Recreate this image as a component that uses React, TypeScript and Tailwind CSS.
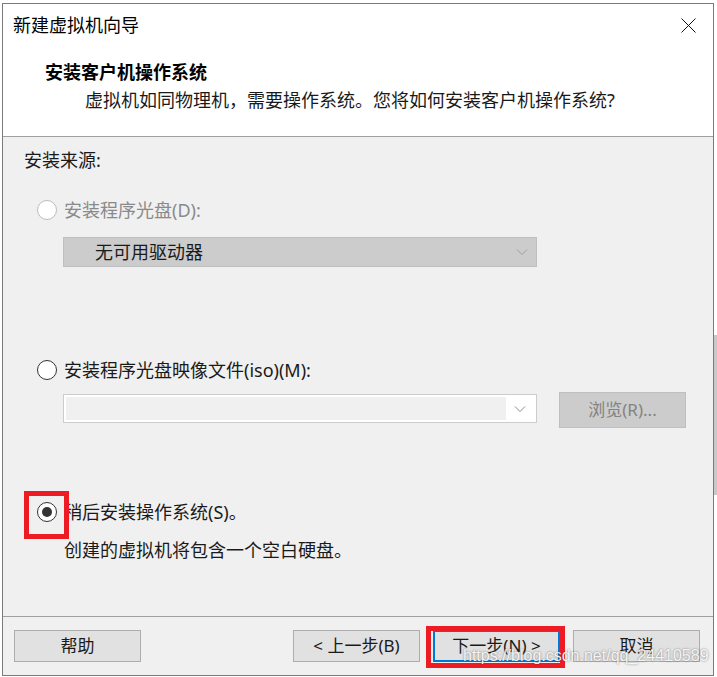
import React from 'react';

const ui = '[font-family:"Noto_Sans","Noto_Sans_CJK_SC",sans-serif]';

function Radio({ checked, disabled }: { checked?: boolean; disabled?: boolean }) {
  return (
    <span
      className={`flex h-5 w-5 shrink-0 items-center justify-center rounded-full border bg-white ${
        disabled ? 'border-[#bcbcbc]' : 'border-[#333333]'
      }`}
    >
      {checked && <span className="h-[10px] w-[10px] rounded-full bg-[#333333]" />}
    </span>
  );
}

function Chevron({ color }: { color: string }) {
  return (
    <svg width="12" height="8" viewBox="0 0 12 8" fill="none">
      <path d="M1 1.5 L6 6.5 L11 1.5" stroke={color} strokeWidth="1" />
    </svg>
  );
}

function Button({ children, primary }: { children: React.ReactNode; primary?: boolean }) {
  return (
    <div
      className={`flex h-8 w-[127px] items-center justify-center bg-[#e1e1e1] text-[17px] text-[#1a1a1a] ${
        primary ? 'border-2 border-[#0078d7]' : 'border border-[#adadad]'
      }`}
    >
      {children}
    </div>
  );
}

export default function App() {
  return (
    <div className={`relative h-[677px] w-[717px] overflow-hidden bg-white ${ui}`}>
      {/* bits of the window behind */}
      <div className="absolute right-0 top-[335px] h-[160px] w-[3px] bg-[#c8c8c8]" />

      <div className="relative ml-[2px] mt-[3px] flex h-[673px] w-[712px] flex-col border border-[#7a7a7a] bg-white">
        {/* title bar */}
        <div className="flex h-[43px] shrink-0 items-center justify-between pl-[10px] pr-[17px]">
          <span className="text-[18px] text-black">新建虚拟机向导</span>
          <svg width="15" height="15" viewBox="0 0 15 15" fill="none">
            <path d="M0.5 0.5 L14.5 14.5 M14.5 0.5 L0.5 14.5" stroke="#111" strokeWidth="1" />
          </svg>
        </div>

        {/* header */}
        <div className="h-[90px] shrink-0 border-b border-[#a0a0a0] pt-[13px]">
          <div className="pl-[42px] text-[18px] font-bold leading-6 text-black">安装客户机操作系统</div>
          <div className="mt-1 pl-[82px] text-[18px] leading-6 text-[#1a1a1a]">
            虚拟机如同物理机，需要操作系统。您将如何安装客户机操作系统?
          </div>
        </div>

        {/* body */}
        <div className="flex flex-1 flex-col bg-[#f0f0f0] pl-[21px] pt-[11px] text-[18px] leading-6">
          <div className="text-[#1a1a1a]">安装来源:</div>

          <div className="mt-[26px] flex items-center gap-[7px] pl-[13px]">
            <Radio disabled />
            <span className="text-[#8a8a8a]">安装程序光盘(D):</span>
          </div>
          <div className="ml-[39px] mt-[15px] flex h-[30px] w-[474px] items-center justify-between border border-[#bfbfbf] bg-[#cccccc] pl-[31px] pr-[8px]">
            <span className="text-[#1a1a1a]">无可用驱动器</span>
            <Chevron color="#a0a0a0" />
          </div>

          <div className="mt-[91px] flex items-center gap-[7px] pl-[13px]">
            <Radio />
            <span className="text-[#1a1a1a]">安装程序光盘映像文件(iso)(M):</span>
          </div>
          <div className="ml-[39px] mt-[10px] flex items-start gap-[22px]">
            <div className="mt-[2px] flex h-[29px] w-[474px] border border-[#cccccc] bg-white p-[2px]">
              <div className="flex-1 bg-[#f0f0f0]" />
              <div className="flex w-[28px] items-center justify-center">
                <Chevron color="#8a8a8a" />
              </div>
            </div>
            <div className="flex h-[36px] w-[127px] items-center justify-center border border-[#bfbfbf] bg-[#cccccc] text-[17px] text-[#838383]">
              浏览(R)...
            </div>
          </div>

          <div className="mt-[72px] flex items-center gap-[7px] pl-[13px]">
            <Radio checked />
            <span className="text-[#1a1a1a]">稍后安装操作系统(S)。</span>
          </div>
          <div className="mt-[14px] pl-[40px] text-[#1a1a1a]">创建的虚拟机将包含一个空白硬盘。</div>
        </div>

        {/* footer */}
        <div className="flex h-[59px] shrink-0 items-start justify-between border-t border-[#a0a0a0] bg-[#f0f0f0] pl-[11px] pr-[13px] pt-[13px]">
          <Button>帮助</Button>
          <div className="flex gap-[13px]">
            <Button>&lt; 上一步(B)</Button>
            <Button primary>下一步(N) &gt;</Button>
            <Button>取消</Button>
          </div>
        </div>

        {/* annotation boxes */}
        <div className="absolute left-[21px] top-[487px] h-[48px] w-[45px] border-[5px] border-[#ed1c24]" />
        <div className="absolute left-[423px] top-[622px] h-[42px] w-[139px] border-[5px] border-[#ed1c24]" />
      </div>

      {/* watermark */}
      <div className="absolute left-[463px] top-[646px] text-[16px] leading-5 text-white/90 [font-family:'Liberation_Sans',sans-serif] [text-shadow:0_0_2px_rgba(0,0,0,0.55)]">
        https://blog.csdn.net/qq_24410589
      </div>
    </div>
  );
}
